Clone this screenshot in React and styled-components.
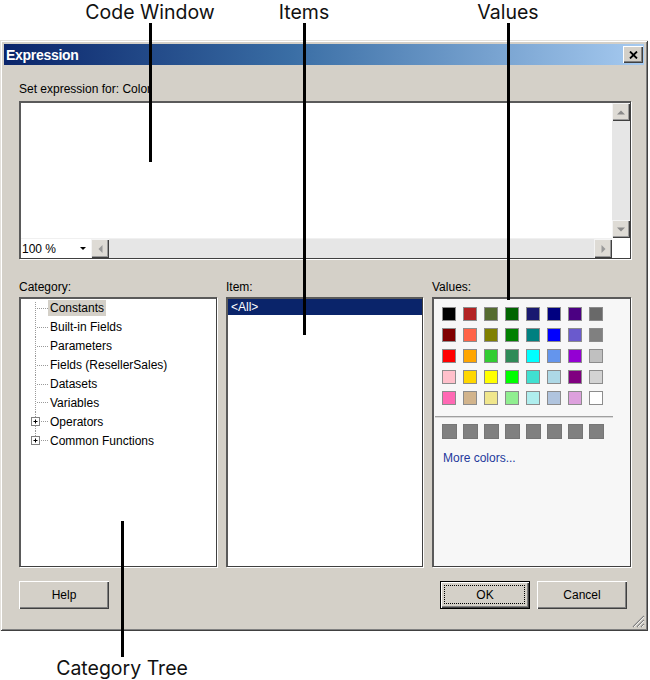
import React from 'react';
import styled, { createGlobalStyle } from 'styled-components';

const Global = createGlobalStyle`
  html, body { margin: 0; padding: 0; background: #fff; }
  body { font-family: "Liberation Sans", Arial, sans-serif; font-size: 12px; color: #000; }
  * { box-sizing: border-box; }
`;

const Figure = styled.div`
  position: relative;
  width: 650px;
  height: 680px;
  padding-top: 40px;
  overflow: hidden;
`;

const Callout = styled.div`
  position: absolute;
  left: ${p => p.$x}px;
  top: ${p => p.$top}px;
  transform: translateX(-50%);
  font-family: Inter, "Open Sans", sans-serif;
  font-size: 19.5px;
  line-height: 24px;
  color: #111;
  white-space: nowrap;
  z-index: 3;
`;

const CalloutLine = styled.div`
  position: absolute;
  left: ${p => p.$x - 1}px;
  top: ${p => p.$top}px;
  width: 3px;
  height: ${p => p.$bottom - p.$top}px;
  background: #000;
  z-index: 3;
`;

const Dialog = styled.div`
  position: relative;
  width: 648px;
  height: 591px;
  padding: 4px;
  background: #d4d0c8;
  display: flex;
  flex-direction: column;
  box-shadow: inset 1px 1px #e4e1dc, inset -1px -1px #404040, inset 2px 2px #fff, inset -2px -2px #808080;
`;

const TitleBar = styled.div`
  height: 21px;
  flex: none;
  display: flex;
  align-items: center;
  justify-content: space-between;
  padding: 0 1px 0 2px;
  background: linear-gradient(90deg, #0a246a 0%, #3a6ea5 45%, #a6caf0 100%);
`;

const Title = styled.span`
  color: #fff;
  font-weight: bold;
  font-size: 14px;
  letter-spacing: -0.3px;
`;

const CloseButton = styled.div`
  width: 20px;
  height: 17px;
  display: flex;
  align-items: center;
  justify-content: center;
  background: #d4d0c8;
  box-shadow: inset 1px 1px #fff, inset -1px -1px #404040, inset -2px -2px #808080;
`;

const Body = styled.div`
  flex: 1;
  display: flex;
  flex-direction: column;
  padding: 17px 13px 0 15px;
`;

const Label = styled.div`
  height: 14px;
  line-height: 14px;
  font-size: 12px;
  margin-bottom: ${p => p.$gap || 3}px;
`;

const Sunken = styled.div`
  border-style: solid;
  border-width: 2px 1px 1px 2px;
  border-color: #5a5a5a #404040 #404040 #5a5a5a;
  box-shadow: 1px 1px 0 #fff;
  background: ${p => p.$bg || '#fff'};
  height: ${p => p.$h}px;
  overflow: hidden;
`;

const CodeGrid = styled.div`
  height: 100%;
  display: grid;
  grid-template-columns: 1fr 18px;
  grid-template-rows: 1fr 20px;
`;

const CodeArea = styled.div`
  background: #fff;
`;

const VScroll = styled.div`
  display: flex;
  flex-direction: column;
  background: #e6e6e6;
`;

const Track = styled.div`
  flex: 1;
  background: #e6e6e6;
`;

const ScrollBtn = styled.div`
  width: 18px;
  height: ${p => p.$h || 18}px;
  flex: none;
  display: flex;
  align-items: center;
  justify-content: center;
  background: #dedbd5;
  box-shadow: inset 1px 1px #f4f4f4, inset -1px -1px #404040, inset -2px -2px #9a9a9a;
`;

const ZoomBar = styled.div`
  display: flex;
  background: #e6e6e6;
  border-top: 1px solid #f0f0f0;
`;

const Combo = styled.div`
  width: 70px;
  flex: none;
  display: flex;
  align-items: center;
  justify-content: space-between;
  padding: 0 5px 0 1px;
  background: #fff;
  font-size: 12px;
`;

const HScroll = styled.div`
  flex: 1;
  display: flex;
`;

const Corner = styled.div`
  background: #fff;
`;

const Lower = styled.div`
  margin-top: 21px;
  display: grid;
  grid-template-columns: 198px 197px 199px;
  justify-content: space-between;
`;

const Column = styled.div`
  display: flex;
  flex-direction: column;
`;

const TreeRow = styled.div`
  height: 18.9px;
  display: flex;
  align-items: center;
  white-space: nowrap;
`;

const TreeText = styled.span`
  padding: 1px 2px;
  line-height: 14px;
  background: ${p => (p.$active ? '#d4d0c8' : 'transparent')};
`;

const ItemRow = styled.div`
  height: 16px;
  line-height: 16px;
  padding-left: 3px;
  background: ${p => (p.$selected ? '#0a246a' : 'transparent')};
  color: ${p => (p.$selected ? '#fff' : '#000')};
`;

const SwatchGrid = styled.div`
  display: grid;
  grid-template-columns: repeat(8, ${p => p.$size}px);
  column-gap: ${p => 21 - p.$size}px;
  row-gap: ${p => 21 - p.$size}px;
  margin: ${p => p.$m};
`;

const Swatch = styled.div`
  width: ${p => p.$size}px;
  height: ${p => p.$size}px;
  background: ${p => p.$c};
  border: 1px solid ${p => p.$b || '#8c8c8c'};
`;

const Separator = styled.div`
  height: 2px;
  margin: 11px 17px 0 1px;
  border-top: 1px solid #a0a0a0;
  border-bottom: 1px solid #d8d8d8;
`;

const MoreLink = styled.div`
  margin: 12px 0 0 9px;
  color: #23389c;
  font-size: 12px;
  line-height: 14px;
`;

const ButtonRow = styled.div`
  margin-top: 14px;
  display: flex;
  justify-content: space-between;
  padding-right: 4px;
`;

const ButtonGroup = styled.div`
  display: flex;
  gap: 7px;
`;

const Button = styled.div`
  position: relative;
  width: 90px;
  height: 28px;
  display: flex;
  align-items: center;
  justify-content: center;
  background: #d4d0c8;
  font-size: 12px;
  border: ${p => (p.$default ? '1px solid #000' : 'none')};
  box-shadow: inset 1px 1px #fff, inset -1px -1px #404040, inset -2px -2px #808080;
  ${p => p.$default && `
    &::after {
      content: '';
      position: absolute;
      inset: 3px 4px 4px 3px;
      border: 1px dotted #000;
    }
  `}
`;

const Grip = styled.svg`
  position: absolute;
  right: 3px;
  bottom: 3px;
`;

const Up = () => (
  <svg width="8" height="5" viewBox="0 0 8 5"><polygon points="0,4.5 8,4.5 4,0.5" fill="#8a8a8a" /></svg>
);
const Down = () => (
  <svg width="8" height="5" viewBox="0 0 8 5"><polygon points="0,0.5 8,0.5 4,4.5" fill="#8a8a8a" /></svg>
);
const Left = () => (
  <svg width="5" height="8" viewBox="0 0 5 8"><polygon points="4.5,0 4.5,8 0.5,4" fill="#9a9a9a" /></svg>
);
const Right = () => (
  <svg width="5" height="8" viewBox="0 0 5 8"><polygon points="0.5,0 0.5,8 4.5,4" fill="#9a9a9a" /></svg>
);

const Connector = ({ first, last, expandable }) => (
  <svg width="27" height="19" viewBox="0 0 27 19" style={{ flex: 'none' }}>
    <line x1="14.5" y1={first ? 3 : 0} x2="14.5" y2={last ? 9.5 : 19} stroke="#9a9a9a" strokeDasharray="1 1" />
    <line x1="16" y1="9.5" x2="27" y2="9.5" stroke="#9a9a9a" strokeDasharray="1 1" />
    {expandable && (
      <g>
        <rect x="10.5" y="5.5" width="8" height="8" fill="#fff" stroke="#808080" />
        <path d="M12.5 9.5h4M14.5 7.5v4" stroke="#000" />
      </g>
    )}
  </svg>
);

const categories = [
  { t: 'Constants', active: true },
  { t: 'Built-in Fields' },
  { t: 'Parameters' },
  { t: 'Fields (ResellerSales)' },
  { t: 'Datasets' },
  { t: 'Variables' },
  { t: 'Operators', exp: true },
  { t: 'Common Functions', exp: true },
];

const colors = [
  '#000000', '#b22222', '#556b2f', '#006400', '#191970', '#000080', '#4b0082', '#696969',
  '#800000', '#ff6347', '#808000', '#008000', '#008080', '#0000ff', '#6a5acd', '#808080',
  '#ff0000', '#ffa500', '#32cd32', '#2e8b57', '#00ffff', '#6495ed', '#9400d3', '#c0c0c0',
  '#ffc0cb', '#ffd700', '#ffff00', '#00ff00', '#40e0d0', '#add8e6', '#800080', '#d3d3d3',
  '#ff69b4', '#d2b48c', '#f0e68c', '#90ee90', '#afeeee', '#b0c4de', '#dda0dd', '#ffffff',
];

const callouts = [
  { text: 'Code Window', x: 150, top: 0, lineTop: 23, lineBottom: 162 },
  { text: 'Items', x: 304, top: 0, lineTop: 23, lineBottom: 335 },
  { text: 'Values', x: 508, top: 0, lineTop: 23, lineBottom: 300 },
  { text: 'Category Tree', x: 122, top: 656, lineTop: 521, lineBottom: 657 },
];

export default function App() {
  return (
    <>
      <Global />
      <Figure>
        {callouts.map(c => (
          <React.Fragment key={c.text}>
            <Callout $x={c.x} $top={c.top}>{c.text}</Callout>
            <CalloutLine $x={c.x} $top={c.lineTop} $bottom={c.lineBottom} />
          </React.Fragment>
        ))}
        <Dialog>
          <TitleBar>
            <Title>Expression</Title>
            <CloseButton>
              <svg width="9" height="8" viewBox="0 0 9 8">
                <path d="M1 0.5L8 7.5M8 0.5L1 7.5" stroke="#000" strokeWidth="1.8" />
              </svg>
            </CloseButton>
          </TitleBar>
          <Body>
            <Label $gap={5}>Set expression for: Color</Label>
            <Sunken $h={158}>
              <CodeGrid>
                <CodeArea />
                <VScroll>
                  <ScrollBtn><Up /></ScrollBtn>
                  <Track />
                  <ScrollBtn><Down /></ScrollBtn>
                </VScroll>
                <ZoomBar>
                  <Combo>
                    <span>100 %</span>
                    <svg width="6" height="3" viewBox="0 0 6 3"><polygon points="0,0 6,0 3,3" fill="#000" /></svg>
                  </Combo>
                  <HScroll>
                    <ScrollBtn $h={19}><Left /></ScrollBtn>
                    <Track />
                    <ScrollBtn $h={19}><Right /></ScrollBtn>
                  </HScroll>
                </ZoomBar>
                <Corner />
              </CodeGrid>
            </Sunken>
            <Lower>
              <Column>
                <Label>Category:</Label>
                <Sunken $h={270}>
                  {categories.map((c, i) => (
                    <TreeRow key={c.t}>
                      <Connector first={i === 0} last={i === categories.length - 1} expandable={c.exp} />
                      <TreeText $active={c.active}>{c.t}</TreeText>
                    </TreeRow>
                  ))}
                </Sunken>
              </Column>
              <Column>
                <Label>Item:</Label>
                <Sunken $h={270}>
                  <ItemRow $selected>&lt;All&gt;</ItemRow>
                </Sunken>
              </Column>
              <Column>
                <Label>Values:</Label>
                <Sunken $h={270} $bg="#f7f7f7">
                  <SwatchGrid $size={14} $m="8px 0 0 8px">
                    {colors.map((c, i) => (
                      <Swatch key={i} $size={14} $c={c} />
                    ))}
                  </SwatchGrid>
                  <Separator />
                  <SwatchGrid $size={15} $m="6px 0 0 8px">
                    {Array.from({ length: 8 }).map((_, i) => (
                      <Swatch key={i} $size={15} $c="#808080" $b="#767676" />
                    ))}
                  </SwatchGrid>
                  <MoreLink>More colors...</MoreLink>
                </Sunken>
              </Column>
            </Lower>
            <ButtonRow>
              <Button>Help</Button>
              <ButtonGroup>
                <Button $default>OK</Button>
                <Button>Cancel</Button>
              </ButtonGroup>
            </ButtonRow>
          </Body>
          <Grip width="14" height="14" viewBox="0 0 14 14">
            <path d="M13 2L2 13M13 6L6 13M13 10L10 13" stroke="#808080" strokeWidth="1.2" />
            <path d="M13 3L3 13M13 7L7 13M13 11L11 13" stroke="#fff" strokeWidth="0.8" />
          </Grip>
        </Dialog>
      </Figure>
    </>
  );
}
